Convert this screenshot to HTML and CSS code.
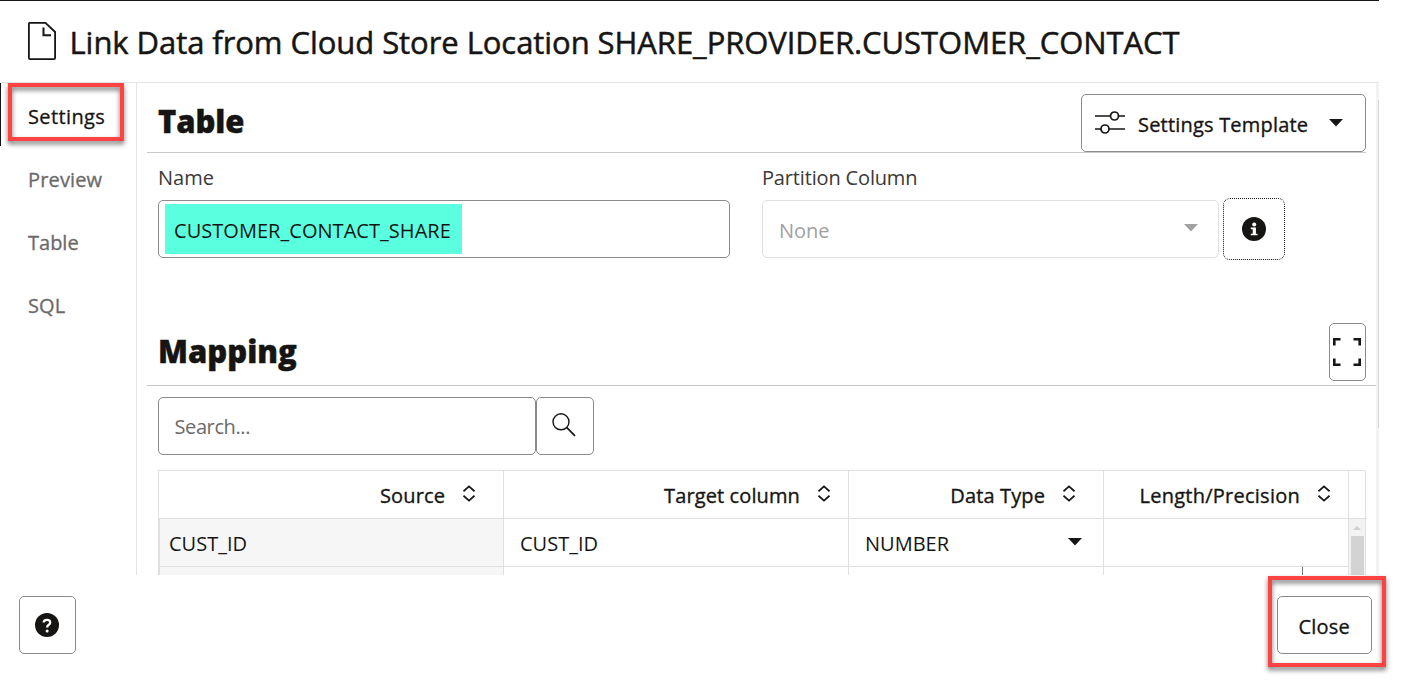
FILE: index.html
```html
<!DOCTYPE html>
<html lang="en">
<head>
<meta charset="utf-8">
<title>Link Data from Cloud Store Location</title>
<link rel="stylesheet" href="styles.css">
</head>
<body>
<div class="dialog">
  <header class="dialog-header">
    <svg class="file-icon" width="30" height="40" viewBox="0 0 30 40" fill="none" stroke="#161513" stroke-width="1.8"><path d="M2.6 1.9H18.5L28.1 11V37Q28.1 38.1 27 38.1H3Q1.9 38.1 1.9 37V2.8Q1.9 1.9 2.6 1.9"/><path d="M16.5 6.5V14.2H24" stroke-width="2"/></svg>
    <h1 class="title">Link Data from Cloud Store Location SHARE_PROVIDER.CUSTOMER_CONTACT</h1>
  </header>
  <div class="body">
    <nav class="tabs">
      <a class="tab active"><span class="t-settings">Settings</span><span class="callout callout-tab"></span></a>
      <a class="tab"><span class="t-preview">Preview</span></a>
      <a class="tab"><span class="t-table">Table</span></a>
      <a class="tab"><span class="t-sql">SQL</span></a>
    </nav>
    <main class="main">
      <div class="content">
        <div class="section-head section-table">
          <h2 class="h-table">Table</h2>
          <button class="btn template">
            <svg width="30" height="24" viewBox="0 0 30 24" fill="none" stroke="#161513" stroke-width="1.7"><path d="M0 5H15.5M23.5 5H30M0 18H6M14 18H30"/><circle cx="19.5" cy="5" r="4"/><circle cx="10" cy="18" r="4"/></svg>
            <span class="t-template">Settings Template</span>
            <svg class="caret" width="14" height="8" viewBox="0 0 14 8"><path d="M0 0H14L7 7.5Z" fill="#161513"/></svg>
          </button>
        </div>
        <div class="fields">
          <div class="field name-field">
            <label class="label t-name">Name</label>
            <div class="input"><span class="highlight">CUSTOMER_CONTACT_SHARE</span></div>
          </div>
          <div class="field part-field">
            <label class="label t-part">Partition Column</label>
            <div class="input disabled"><span class="t-none">None</span><svg width="14" height="8" viewBox="0 0 14 8"><path d="M0 0H14L7 7.5Z" fill="#a2a1a0"/></svg></div>
          </div>
          <button class="info"><svg width="24" height="24" viewBox="0 0 24 24"><circle cx="12" cy="12" r="12" fill="#161513"/><circle cx="12.2" cy="7.4" r="2" fill="#fff"/><path d="M8.8 10.6H13.9V16.7H15.5V18.3H8.8V16.7H10.7V12.2H8.8Z" fill="#fff"/></svg></button>
        </div>
        <div class="section-head section-mapping">
          <h2 class="h-mapping">Mapping</h2>
          <button class="btn expand"><svg width="28" height="28" viewBox="0 0 28 28" fill="none" stroke="#161513" stroke-width="2.6"><path d="M1.3 7.5V1.3H7.5M20.5 1.3H26.7V7.5M26.7 20.5V26.7H20.5M7.5 26.7H1.3V20.5"/></svg></button>
        </div>
        <div class="search">
          <div class="input search-input"><span class="t-search">Search...</span></div>
          <button class="btn search-btn"><svg width="24" height="24" viewBox="0 0 24 24" fill="none" stroke="#161513" stroke-width="1.4"><circle cx="9" cy="8.8" r="8"/><path d="M14.6 14.4L23 22.8" stroke-width="1.7"/></svg></button>
        </div>
        <div class="grid">
          <div class="row head">
            <div class="cell"><span class="h-source">Source</span><svg class="sort" width="12" height="17" viewBox="0 0 12 17"><path d="M.5 6.3L6 1.3L11.5 6.3M.5 10.7L6 15.7L11.5 10.7"/></svg></div>
            <div class="cell"><span class="h-target">Target column</span><svg class="sort" width="12" height="17" viewBox="0 0 12 17"><path d="M.5 6.3L6 1.3L11.5 6.3M.5 10.7L6 15.7L11.5 10.7"/></svg></div>
            <div class="cell data-head"><span class="h-type">Data Type</span><svg class="sort" width="12" height="17" viewBox="0 0 12 17"><path d="M.5 6.3L6 1.3L11.5 6.3M.5 10.7L6 15.7L11.5 10.7"/></svg></div>
            <div class="cell"><span class="h-length">Length/Precision</span><svg class="sort" width="12" height="17" viewBox="0 0 12 17"><path d="M.5 6.3L6 1.3L11.5 6.3M.5 10.7L6 15.7L11.5 10.7"/></svg></div>
            <div class="cell"></div>
          </div>
          <div class="row">
            <div class="cell source"><span class="t-id">CUST_ID</span></div>
            <div class="cell"><span class="t-id">CUST_ID</span></div>
            <div class="cell type"><span class="t-number">NUMBER</span><svg width="14" height="8" viewBox="0 0 14 8"><path d="M0 0H14L7 7.5Z" fill="#161513"/></svg></div>
            <div class="cell"></div>
            <div class="cell grid-scroll"><svg width="8" height="4" viewBox="0 0 8 4"><path d="M0 4L4 0L8 4Z" fill="#cfcfcf"/></svg><div class="thumb"></div></div>
          </div>
          <div class="row">
            <div class="cell source"></div>
            <div class="cell"></div>
            <div class="cell"></div>
            <div class="cell split"><i class="tick"></i></div>
            <div class="cell grid-scroll"><div class="thumb"></div></div>
          </div>
        </div>
      </div>
      <div class="scrollbar"><div class="scroll-thumb"></div></div>
    </main>
  </div>
  <footer class="footer">
    <button class="btn help"><svg width="24" height="24" viewBox="0 0 24 24"><circle cx="12" cy="12" r="12" fill="#161513"/><path d="M8.7 9.6Q8.7 6.9 12 6.9Q15.2 6.9 15.2 9.4Q15.2 10.9 13.5 12Q12.1 12.9 12.1 14.6" fill="none" stroke="#fff" stroke-width="2.3"/><circle cx="12.1" cy="17.9" r="1.5" fill="#fff"/></svg></button>
    <div class="close-wrap"><button class="btn close"><span class="t-close">Close</span></button><span class="callout callout-close"></span></div>
  </footer>
</div>
</body>
</html>
```

FILE: styles.css
```css
* { box-sizing: border-box; }
body { margin: 0; width: 1411px; height: 687px; overflow: hidden; background: #fff; color: #161513; font: 20px/28px "Open Sans", "Noto Sans", sans-serif; }
h1, h2 { margin: 0; white-space: nowrap; }
span, label { white-space: nowrap; }
svg { display: block; flex: none; }
button { font: inherit; color: inherit; background: #fff; margin: 0; padding: 0; }
.dialog { width: 1379px; height: 687px; border-top: 1px solid #161513; display: flex; flex-direction: column; }
.dialog-header { height: 82px; flex: none; display: flex; padding: 20px 0 0 27px; gap: 12.5px; border-bottom: 1px solid #e4e4e3; }
.title { font-size: 31px; line-height: 42px; font-weight: 400; letter-spacing: -0.06px; -webkit-text-stroke: .5px #161513; }
.body { height: 492px; flex: none; display: flex; overflow: hidden; }
.tabs { width: 137px; flex: none; border-right: 1px solid #e4e4e3; }
.tab { position: relative; display: flex; align-items: center; height: 63px; padding: 4px 0 0 28px; color: #6b6a69; -webkit-text-stroke: .3px; }
.tab.active { color: #161513; box-shadow: inset 1px 0 #161513; }
.t-settings { letter-spacing: .38px; }
.t-preview, .t-sql { letter-spacing: .15px; }
.callout { position: absolute; border: 4px solid #ff4343; filter: drop-shadow(0 3px 2.5px rgba(0,0,0,.55)); pointer-events: none; }
.callout-tab { left: 8px; top: 0; width: 116px; height: 58px; }
.main { flex: 1; display: flex; min-width: 0; }
.content { width: 1239px; flex: none; padding-left: 10px; }
.scrollbar { width: 3px; background: #f3f3f3; padding-top: 17px; }
.scroll-thumb { height: 328px; margin-left: 2px; background: #d3d3d3; }
.btn { border: 1px solid #8b8a89; border-radius: 5px; display: flex; align-items: center; height: 58px; }
.btn span, .head span { -webkit-text-stroke: .35px #161513; }
.section-head { display: flex; justify-content: space-between; border-bottom: 1px solid #c9c8c8; padding-left: 11px; }
.section-head h2 { font-size: 31px; line-height: 40px; font-weight: 800; -webkit-text-stroke: .4px #161513; }
.section-table { height: 70px; width: 1219px; padding-top: 11px; }
.section-table h2 { padding-top: 7px; letter-spacing: -.1px; }
.section-mapping { margin-top: 60px; height: 64px; width: 1229px; padding: 1px 10px 0 11px; }
.section-mapping h2 { padding-top: 8px; }
.template { width: 285px; padding-left: 13px; }
.template .t-template { margin-left: 13px; width: 171px; padding-top: 3px; letter-spacing: .2px; text-align: left; }
.template .caret { margin-left: 20px; }
.fields { display: flex; padding: 11px 0 0 11px; height: 109px; }
.label { display: block; height: 26px; line-height: 28px; color: #3a3938; margin-bottom: 10px; }
.t-part { letter-spacing: -.16px; }
.name-field { width: 572px; margin-right: 32px; }
.part-field { width: 457px; margin-right: 4px; }
.input { height: 58px; border: 1px solid #8b8a89; border-radius: 5px; display: flex; align-items: center; padding-left: 6px; }
.highlight { width: 297px; height: 50px; background: #59ffde; padding: 13px 0 0 9px; letter-spacing: .04px; }
.disabled { border-color: #e0e0e0; color: #a2a1a0; padding: 0 20px 0 16px; justify-content: space-between; }
.disabled span { padding-top: 3px; }
.disabled svg { margin-bottom: 2px; }
.info { width: 62px; height: 62px; margin-top: 34px; border: 1px dotted #161513; border-radius: 7px; display: grid; place-items: center; }
.expand { width: 37px; height: 58px; justify-content: center; padding-right: 1px; }
.search { display: flex; padding: 11px 0 0 11px; }
.search-input { width: 378px; padding: 2px 0 0 15.5px; color: #6b6a69; }
.t-search { letter-spacing: -.4px; }
.search-btn { width: 58px; justify-content: center; padding-right: 2px; }
.search-btn svg { margin-bottom: 3px; }
.grid { width: 1208px; margin: 15px 0 0 11px; border: 1px solid #e0e0e0; border-bottom: 0; }
.row { display: grid; grid-template-columns: 345px 345px 255px 245px 1fr; height: 48px; }
.cell { display: flex; align-items: center; border-right: 1px solid #e0e0e0; border-bottom: 1px solid #e0e0e0; padding-left: 16px; }
.cell:last-child { border-right: 0; padding: 0; }
.cell span { padding-top: 2px; }
.source { background: #f6f6f6; padding-left: 10px; box-shadow: inset 1px 0 #e0e0e0; }
.head .cell { justify-content: flex-end; gap: 18px; padding-right: 18px; letter-spacing: .12px; }
.head .cell:first-child { padding-right: 28px; }
.head .data-head { padding-right: 28px; }
.head .h-length { letter-spacing: .25px; }
.sort { fill: none; stroke: #161513; stroke-width: 1.7; margin-bottom: 2px; }
.type { justify-content: space-between; padding-right: 21px; }
.type svg { margin-bottom: 2px; }
.grid-scroll { flex-direction: column; background: #f3f3f3; border-bottom: 0; }
.grid-scroll svg { margin: 7px 0 6px; }
.thumb { width: 13px; flex: 1; background: #d3d3d3; }
.split { justify-content: flex-end; padding-right: 45px; }
.tick { width: 1px; height: 100%; background: #777; }
.footer { display: flex; justify-content: space-between; padding: 21px 7px 0 19px; }
.help { width: 57px; justify-content: center; padding-right: 1px; }
.close-wrap { position: relative; }
.close { width: 95px; padding: 3px 0 0 20.5px; }
.t-close { letter-spacing: .2px; }
.callout-close { left: -9px; top: -20px; width: 118px; height: 91px; }
```
